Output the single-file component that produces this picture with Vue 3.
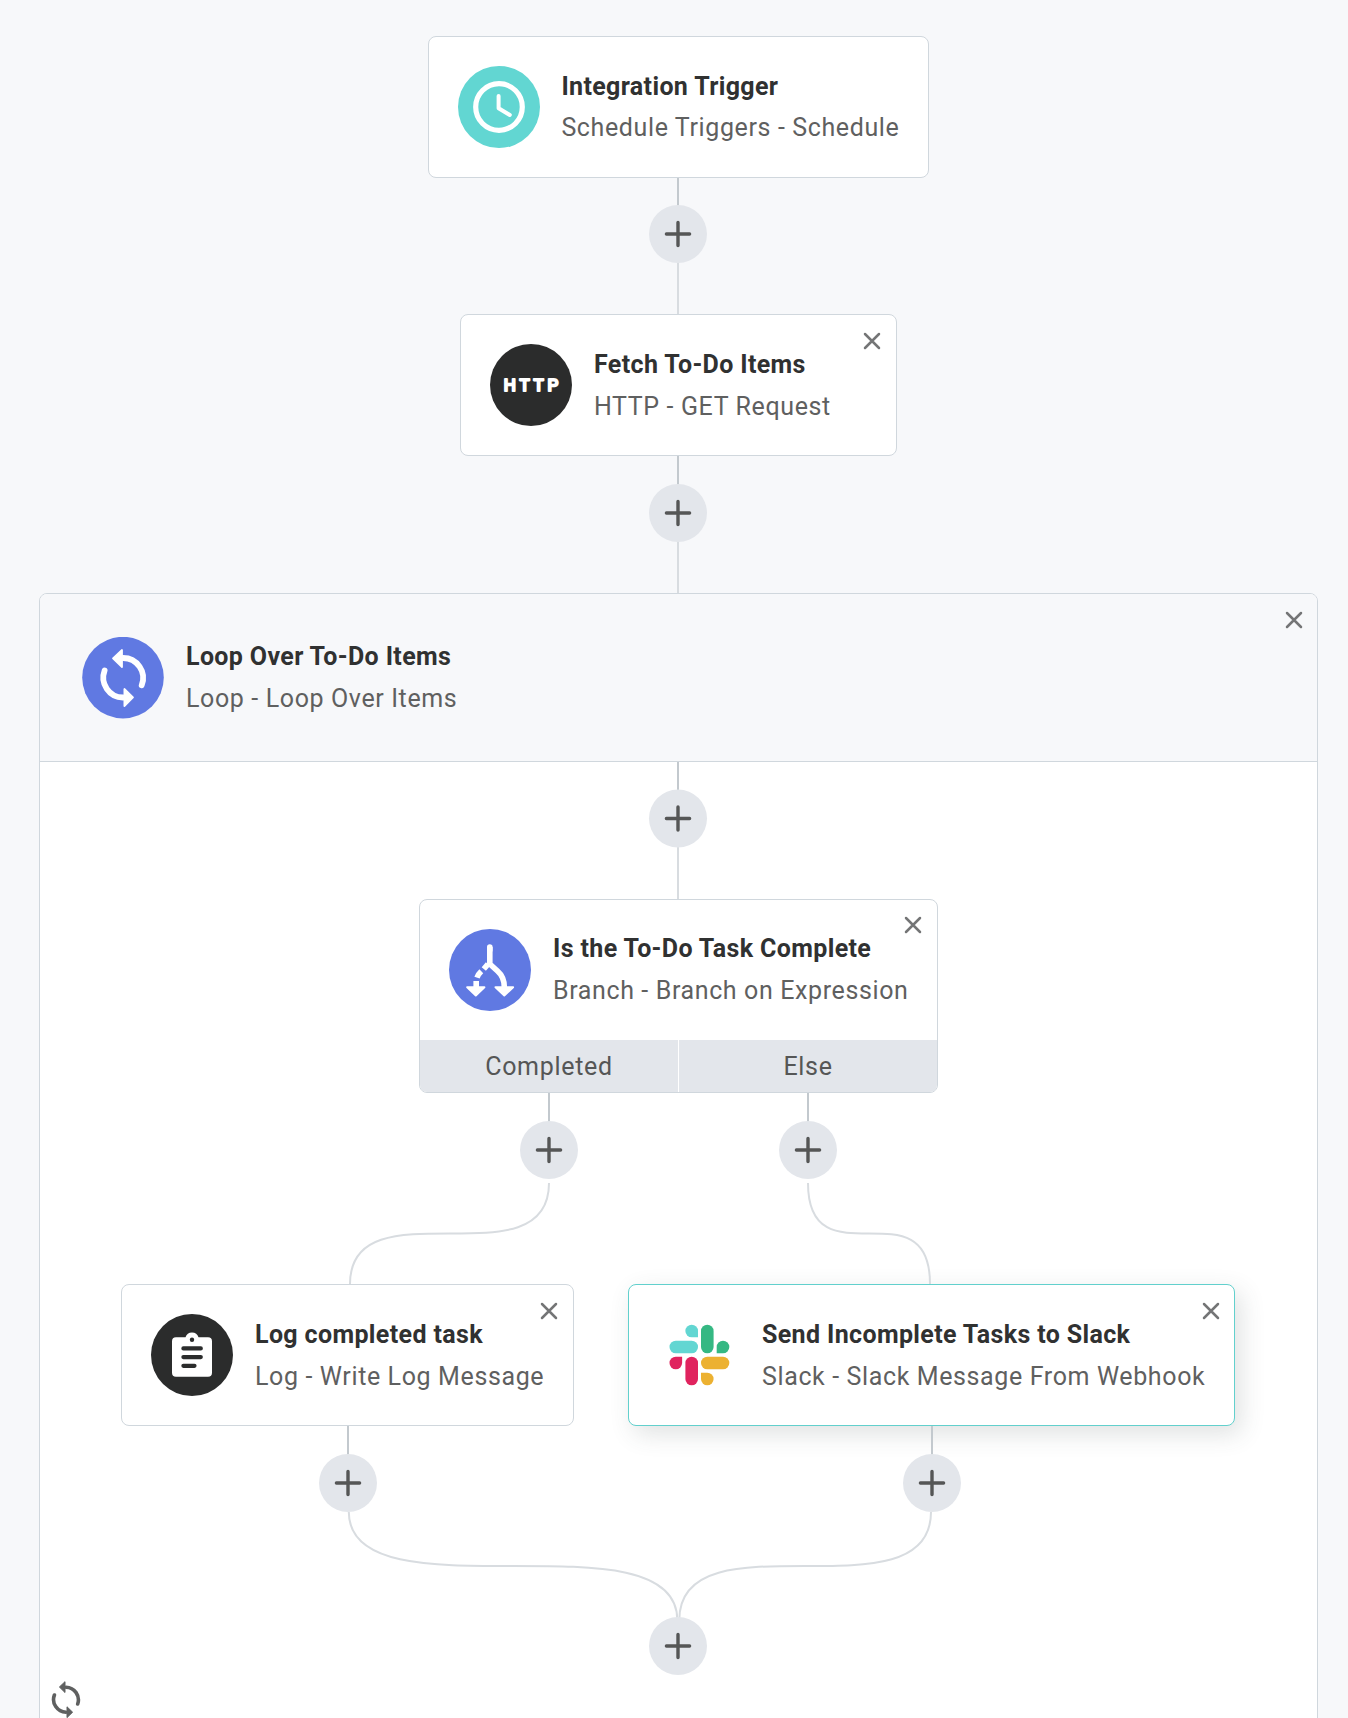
<script setup>
const steps = [
  { id: 'trigger', icon: 'clock', title: 'Integration Trigger', sub: 'Schedule Triggers - Schedule', x: 428, y: 36, w: 501, fixed: true },
  { id: 'fetch', icon: 'http', title: 'Fetch To-Do Items', sub: 'HTTP - GET Request', x: 460, y: 314, w: 437 },
  { id: 'branch', icon: 'branch', title: 'Is the To-Do Task Complete', sub: 'Branch - Branch on Expression', x: 419, y: 899, w: 519, branches: ['Completed', 'Else'] },
  { id: 'log', icon: 'log', title: 'Log completed task', sub: 'Log - Write Log Message', x: 121, y: 1284, w: 453 },
  { id: 'slack', icon: 'slack', title: 'Send Incomplete Tasks to Slack', sub: 'Slack - Slack Message From Webhook', x: 628, y: 1284, w: 607, selected: true },
]

const adders = [
  [678, 234], [678, 513], [678, 818.5], [549, 1150], [808, 1150], [348, 1483], [932, 1483], [678, 1646],
]

// [x, from, to] of the short connectors leaving a step
const stems = [
  [678, 178, 206], [678, 456, 485], [678, 762, 790], [549, 1093, 1122], [808, 1093, 1122], [348, 1426, 1455], [932, 1426, 1455],
]
const links = [[678, 262, 314], [678, 541, 593], [678, 847, 899]]

const curve = (x1, y1, x2, y2) => `M${x1} ${y1}C${x1} ${y2} ${x2} ${y1} ${x2} ${y2}`
const curves = [
  curve(549, 1183, 350, 1284),
  curve(808, 1183, 930, 1284),
  curve(348.8, 1512, 677.3, 1620),
  curve(931, 1512, 679.3, 1620),
]
</script>

<template>
  <main class="canvas">
    <section class="loop">
      <header class="loop-head">
        <svg class="icon loop-icon" viewBox="0 0 82 82">
          <circle cx="41" cy="40.6" r="40.8" fill="#6079e2" />
          <g fill="none" stroke="#fff" stroke-width="5.8" stroke-linecap="round">
            <path d="M41 21A20 20 0 0 1 59.7 48.3" />
            <path d="M22.6 33.5A20 20 0 0 0 41 60.5" />
          </g>
          <path d="M31 21.4 40 13v17zM51 60.3 42.4 52v17z" fill="#fff" stroke="#fff" stroke-width="1.8" stroke-linejoin="round" />
        </svg>
        <div class="text">
          <h2>Loop Over To-Do Items</h2>
          <p>Loop - Loop Over Items</p>
        </div>
        <svg class="close" viewBox="0 0 18 18"><path d="M2 2l14 14M16 2L2 16" /></svg>
      </header>
      <svg class="loop-end" viewBox="0 0 30 40">
        <g fill="none" stroke="#5f6060" stroke-width="3.6" stroke-linecap="round">
          <path d="M15 7.2A12.7 12.7 0 0 1 26.7 24" />
          <path d="M3.4 15A12.7 12.7 0 0 0 15 32.2" />
        </g>
        <path d="M8.4 7 14 1.7v10.8zM21.6 32.2 16 26.8v10.8z" fill="#5f6060" stroke="#5f6060" stroke-linejoin="round" />
      </svg>
    </section>

    <article
      v-for="s in steps"
      :key="s.id"
      class="step"
      :class="[s.id, { selected: s.selected }]"
      :style="{ left: s.x + 'px', top: s.y + 'px', width: s.w + 'px' }"
    >
      <div class="step-main">
        <svg class="icon" viewBox="0 0 82 82">
          <template v-if="s.icon === 'clock'">
            <circle cx="41" cy="41" r="41" fill="#62d6d2" />
            <g fill="none" stroke="#fff" stroke-linecap="round" stroke-linejoin="round">
              <circle cx="41" cy="41" r="23.3" stroke-width="5.2" />
              <path d="M40.6 30v12.2L51.8 49" stroke-width="4" />
            </g>
          </template>
          <template v-else-if="s.icon === 'http'">
            <circle cx="41" cy="41" r="41" fill="#2b2c2c" />
            <text class="http-mark" x="13.8" y="47.2" textLength="54.4" lengthAdjust="spacing">HTTP</text>
          </template>
          <template v-else-if="s.icon === 'branch'">
            <circle cx="41" cy="41" r="41" fill="#6079e2" />
            <g fill="none" stroke="#fff" stroke-width="5.6">
              <path d="M40.8 18v17L48.5 42Q55.300 48 55.300 58" stroke-linejoin="round" />
              <path d="M39 35.200 34.800 40M32.300 42.200Q29.300 45 28 48.600M27.200 52v7" />
              <path d="M40.8 18v3" stroke-linecap="round" />
            </g>
            <path d="M18.200 58.300h17.200L26.800 66.500zM46.500 58.300h17.600L55.300 66.500z" fill="#fff" stroke="#fff" stroke-width="2" stroke-linejoin="round" />
          </template>
          <template v-else-if="s.icon === 'log'">
            <circle cx="41" cy="41" r="41" fill="#2b2c2c" />
            <path d="M25 23.300h9.500a6.800 6.800 0 0 1 13 0H57a4 4 0 0 1 4 4v31.500a4 4 0 0 1-4 4H25a4 4 0 0 1-4-4V27.300a4 4 0 0 1 4-4z" fill="#fff" />
            <circle cx="41" cy="25.800" r="2.200" fill="#2b2c2c" />
            <path d="M32.400 34.400H49.800M32.400 43.100H49.800M32.400 51.800H43.500" stroke="#2b2c2c" stroke-width="4.200" stroke-linecap="round" />
          </template>
          <template v-else>
            <g fill="#62d6d2">
              <path d="M40 23.300h-6.300a6.300 6.300 0 1 1 6.300-6.300z" />
              <rect x="11.500" y="26.700" width="28.500" height="12.600" rx="6.300" />
            </g>
            <g fill="#35b883">
              <rect x="43" y="10.700" width="12.600" height="28.600" rx="6.300" />
              <path d="M58.700 39.300V33a6.300 6.300 0 1 1 6.300 6.300z" />
            </g>
            <g fill="#e0235e">
              <path d="M24.100 42.700V49a6.300 6.300 0 1 1-6.300-6.300z" />
              <rect x="27.400" y="42.700" width="12.600" height="28.600" rx="6.300" />
            </g>
            <g fill="#ecb131">
              <rect x="43" y="42.700" width="28.300" height="12.600" rx="6.300" />
              <path d="M43 58.700h6.300A6.300 6.300 0 1 1 43 65z" />
            </g>
          </template>
        </svg>
        <div class="text">
          <h2>{{ s.title }}</h2>
          <p>{{ s.sub }}</p>
        </div>
        <svg v-if="!s.fixed" class="close" viewBox="0 0 18 18"><path d="M2 2l14 14M16 2L2 16" /></svg>
      </div>
      <footer v-if="s.branches" class="branches">
        <span v-for="b in s.branches" :key="b">{{ b }}</span>
      </footer>
    </article>

    <svg class="edges" viewBox="0 0 1348 1718">
      <path v-for="[x, a, b] in stems" :key="'s' + x + a" :d="`M${x} ${a}V${b}`" stroke="#c3c9ce" />
      <path v-for="[x, a, b] in links" :key="'l' + a" :d="`M${x} ${a}V${b}`" />
      <path v-for="d in curves" :key="d" :d="d" />
      <g v-for="[x, y] in adders" :key="x + '-' + y">
        <circle :cx="x" :cy="y" r="29" fill="#e3e6eb" stroke="none" />
        <path class="plus" :d="`M${x - 11.6} ${y}h23.2M${x} ${y - 11.6}v23.2`" />
      </g>
    </svg>
  </main>
</template>

<style>
body {
  margin: 0;
}
</style>

<style scoped>
.canvas {
  position: relative;
  width: 1348px;
  height: 1718px;
  overflow: hidden;
  background: #f7f8fa;
  font-family: Roboto, sans-serif;
}
.edges {
  position: absolute;
  left: 0;
  top: 0;
  width: 1348px;
  height: 1718px;
  fill: none;
  stroke: #d8dce0;
  stroke-width: 2;
}
.plus {
  stroke: #555656;
  stroke-width: 3.4;
  stroke-linecap: round;
}
.loop {
  position: absolute;
  left: 39px;
  top: 593px;
  width: 1279px;
  height: 1140px;
  box-sizing: border-box;
  border: 1px solid #d0d7dd;
  border-radius: 8px 8px 0 0;
  background: #fff;
}
.loop-head {
  position: relative;
  display: flex;
  align-items: center;
  gap: 22px;
  height: 167px;
  padding-left: 42px;
  border-bottom: 1px solid #d0d7dd;
  border-radius: 7px 7px 0 0;
  background: #f7f8fa;
}
.loop-end {
  position: absolute;
  left: 11px;
  top: 1086px;
  width: 30px;
  height: 40px;
}
.step {
  position: absolute;
  box-sizing: border-box;
  border: 1px solid #d0d7dd;
  border-radius: 8px;
  background: #fff;
}
.step.selected {
  border-color: #62d0cd;
  box-shadow: 6px 8px 24px rgba(60, 75, 75, 0.16);
}
.step-main {
  position: relative;
  display: flex;
  align-items: center;
  gap: 22px;
  height: 140px;
  padding-left: 29px;
}
.trigger .step-main {
  gap: 21.4px;
}
.icon {
  flex: none;
  width: 82px;
  height: 82px;
}
.text {
  white-space: nowrap;
}
.step .text {
  padding-top: 2px;
}
.step.branch .text {
  padding-top: 0;
}
h2,
p {
  margin: 0;
  font-size: 25px;
  line-height: 42px;
}
h2 {
  color: #303131;
  font-weight: 700;
  letter-spacing: 0.36px;
}
p {
  color: #5f6060;
  font-weight: 400;
  letter-spacing: 0.62px;
}
.step.trigger .text {
  padding-bottom: 2px;
}
.trigger p {
  line-height: 40px;
}
.close {
  position: absolute;
  right: 15px;
  top: 17px;
  width: 18px;
  height: 18px;
  fill: none;
  stroke: #747576;
  stroke-width: 2.5;
  stroke-linecap: round;
}
.loop-head .close,
.slack .close {
  right: 14px;
}
.branch .close {
  top: 16px;
}
.http-mark {
  font: 400 17px Roboto, sans-serif;
  fill: #fff;
  stroke: #fff;
  stroke-width: 2.2;
  stroke-linejoin: round;
}
.branches {
  display: flex;
  gap: 1px;
  height: 52px;
}
.branches span {
  flex: 1;
  background: #e3e6eb;
  color: #555656;
  font-size: 25px;
  line-height: 54px;
  height: 52px;
  letter-spacing: 0.7px;
  text-align: center;
}
.branches span:first-child {
  border-radius: 0 0 0 7px;
}
.branches span:last-child {
  border-radius: 0 0 7px 0;
}
</style>
